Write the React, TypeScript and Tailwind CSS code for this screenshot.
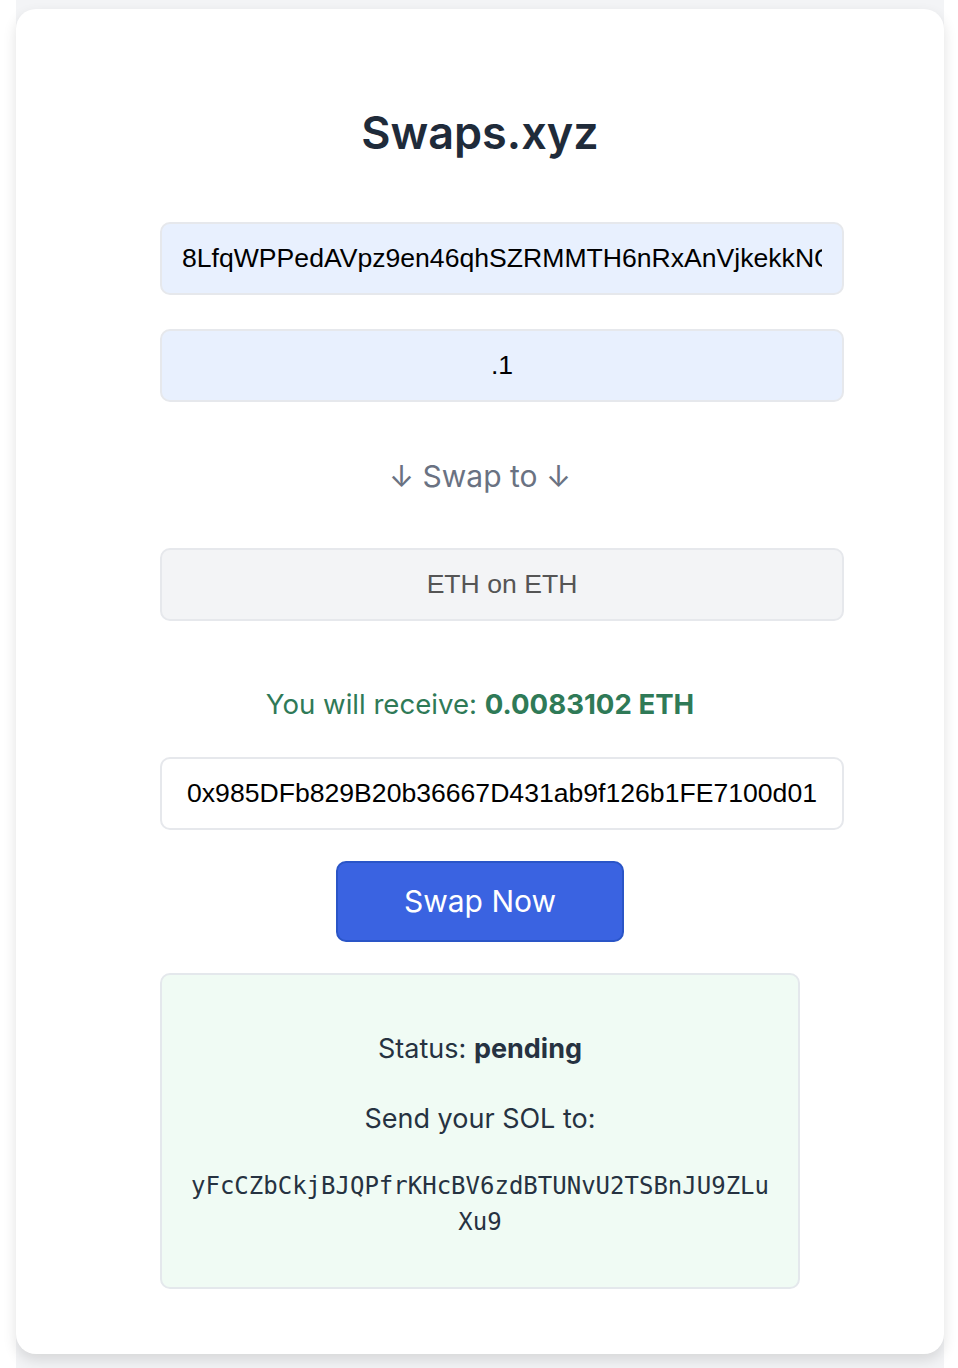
import React from "react";

const sans = "font-['Inter','Noto_Sans',sans-serif]";
const helv = "font-['Liberation_Sans',Arial,sans-serif]";

export default function App() {
  const sourceAddress = "8LfqWPPedAVpz9en46qhSZRMMTH6nRxAnVjkekkNGqWx";
  const depositAddress = "yFcCZbCkjBJQPfrKHcBV6zdBTUNvU2TSBnJU9ZLuXu9";

  return (
    <div className="min-h-screen bg-white">
      <div className="ml-4 mr-[14px] min-h-[1368px] bg-gray-100 pt-[9px]">
        {/* Card */}
        <div className="rounded-[20px] bg-white pt-[96px] pb-[65px] shadow-[0_6px_14px_rgba(0,0,0,0.12)]">
          <h1 className={`${sans} text-center text-[45px] leading-[56px] font-semibold text-[#1f2b3a]`}>
            Swaps.xyz
          </h1>

          <div className="mx-auto mt-[61px] flex w-[640px] flex-col items-start">
            <input
              readOnly
              value={sourceAddress}
              className={`${helv} box-content w-full rounded-[10px] border-2 border-[#e6e8ec] bg-[#e8f0fe] px-[20px] py-[20px] text-[26.6px] leading-[29px] text-black outline-none`}
            />
            <input
              readOnly
              value=".1"
              className={`${helv} mt-[34px] box-content w-full rounded-[10px] border-2 border-[#e6e8ec] bg-[#e8f0fe] px-[20px] py-[20px] text-center text-[26.6px] leading-[29px] text-black outline-none`}
            />

            <p className={`${sans} mt-[56px] w-full text-center text-[30px] leading-[36px] text-gray-500`}>
              ↓ Swap to ↓
            </p>

            <div
              className={`${helv} mt-[54px] box-content w-full rounded-[10px] border-2 border-[#e6e8ec] bg-gray-100 px-[20px] py-[20px] text-center text-[26.6px] leading-[29px] text-[#555]`}
            >
              ETH on ETH
            </div>

            <p className={`${sans} mt-[65px] w-full text-center text-[27.6px] leading-[36px] text-[#2f7a57]`}>
              You will receive: <span className="font-bold">0.0083102 ETH</span>
            </p>

            <input
              readOnly
              value="0x985DFb829B20b36667D431ab9f126b1FE7100d01"
              className={`${helv} mt-[35px] box-content w-full rounded-[10px] border-2 border-[#e6e8ec] bg-white px-[20px] py-[20px] text-center text-[26.6px] leading-[29px] text-black outline-none`}
            />

            <button
              className={`${sans} mt-[31px] h-[81px] w-[288px] self-center rounded-[10px] border-2 border-[#2a55c7] bg-[#3a63e1] text-[30px] text-white`}
            >
              Swap Now
            </button>

            {/* Status */}
            <div className="mt-[31px] w-full rounded-[10px] border-2 border-[#e4e8ec] bg-[#f0fbf4] px-[27px] pt-[55px] pb-[47px] text-center text-[#263241]">
              <p className={`${sans} text-[27px] leading-[38px]`}>
                Status: <span className="font-bold">pending</span>
              </p>
              <p className={`${sans} mt-[32px] text-[27px] leading-[38px]`}>Send your SOL to:</p>
              <p className="mt-[30px] font-['DejaVu_Sans_Mono',monospace] text-[24px] leading-[36px] break-all">
                {depositAddress}
              </p>
            </div>
          </div>
        </div>
      </div>
    </div>
  );
}
